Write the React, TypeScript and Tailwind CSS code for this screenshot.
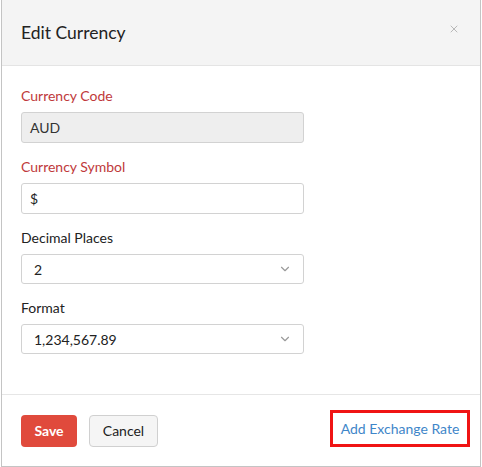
import { X, ChevronDown } from 'lucide-react'

function Field({
  label,
  required,
  children,
}: {
  label: string
  required?: boolean
  children: React.ReactNode
}) {
  return (
    <div className="mb-[14px]">
      <div className={`h-5 leading-5 text-[14px] mb-[6px] ${required ? 'text-[#c0393b]' : 'text-[#222]'}`}>
        {label}
      </div>
      {children}
    </div>
  )
}

function Select({ value }: { value: string }) {
  return (
    <div className="w-[283px] h-[30px] border border-[#d2d2d2] rounded-[3px] bg-white flex items-center justify-between pl-[12px] pr-[11px] text-[14px] text-[#222]">
      <span>{value}</span>
      <ChevronDown className="w-[14px] h-[14px] text-[#9a9a9a]" strokeWidth={2} />
    </div>
  )
}

export default function App() {
  return (
    <div className="w-[482px] h-[467px] bg-white" style={{ fontFamily: 'Lato, "Open Sans", sans-serif' }}>
      <div className="ml-px w-[480px] h-[467px] border-l border-r border-b border-[#c4c4c4] flex flex-col">
        {/* Header */}
        <div className="h-[66px] bg-[#f4f4f4] border-b border-[#e4e4e4] flex items-center justify-between pl-[19px] pr-[20px] shrink-0">
          <h2 className="text-[17.5px] text-[#222] font-normal pt-px">Edit Currency</h2>
          <X className="w-[12px] h-[12px] text-[#b8b8b8] -mt-[8px]" strokeWidth={2} />
        </div>

        {/* Body */}
        <div className="pt-[20px] px-[19px] h-[329px] border-b border-[#e6e6e6] shrink-0">
          <Field label="Currency Code" required>
            <div className="w-[283px] h-[31px] border border-[#d2d2d2] rounded-[3px] bg-[#eeeeee] flex items-center px-[8px] text-[14px] text-[#333]">
              AUD
            </div>
          </Field>
          <Field label="Currency Symbol" required>
            <div className="w-[283px] h-[31px] border border-[#d2d2d2] rounded-[3px] bg-white flex items-center px-[8px] text-[14px] text-[#222]">
              $
            </div>
          </Field>
          <Field label="Decimal Places">
            <Select value="2" />
          </Field>
          <Field label="Format">
            <Select value="1,234,567.89" />
          </Field>
        </div>

        {/* Footer */}
        <div className="flex items-center justify-between pl-[19px] pr-[10px] pt-[15px]">
          <div className="flex items-center gap-[12px] pt-[4px]">
            <button className="w-[56px] h-[32px] rounded-[4px] bg-[#e04a3c] text-white font-bold text-[14px]">
              Save
            </button>
            <button className="w-[69px] h-[32px] rounded-[4px] bg-[#f5f5f5] border border-[#d0d0d0] text-[#222] text-[14px]">
              Cancel
            </button>
          </div>
          <div className="w-[140px] h-[37px] border-[3px] border-[#f01414] flex items-center justify-center text-[14px] text-[#3f86c9]">
            Add Exchange Rate
          </div>
        </div>
      </div>
    </div>
  )
}
